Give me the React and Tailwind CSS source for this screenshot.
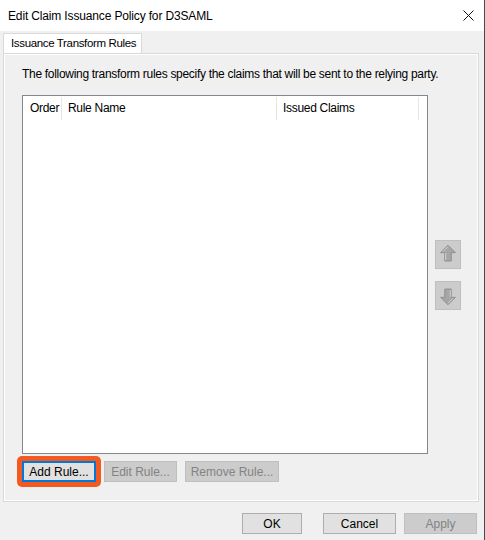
import React from "react";

const ui = "font-['Liberation_Sans',Arial,sans-serif]";

function ArrowIcon({ down = false }) {
  // chunky grey arrow used on the disabled move up / move down buttons
  return (
    <svg width="26" height="29" viewBox="0 0 26 29" className={down ? "rotate-180" : ""}>
      <path
        d="M13 4.5 L21 12.5 L16.5 12.5 L16.5 21.5 L9.5 21.5 L9.5 12.5 L5 12.5 Z"
        fill="#a6a6a6"
        stroke="#8c8c8c"
        strokeWidth="1"
        strokeLinejoin="miter"
      />
      <path d="M13 6 L7.5 11.5 M10.5 13 L10.5 20.5" stroke="#d6d6d6" strokeWidth="1" fill="none" />
    </svg>
  );
}

function SideButton({ down }) {
  return (
    <div className="w-[26px] h-[29px] bg-[#cccccc] border border-[#bfbfbf] flex items-center justify-center">
      <ArrowIcon down={down} />
    </div>
  );
}

function Btn({ children, disabled, w, className = "" }) {
  return (
    <button
      className={`h-[21px] ${w} text-[12px] leading-none border ${
        disabled
          ? "bg-[#cccccc] border-[#bfbfbf] text-[#838383]"
          : "bg-[#e1e1e1] border-[#adadad] text-black"
      } ${className}`}
    >
      {children}
    </button>
  );
}

export default function App() {
  return (
    <div className={`w-[485px] h-[540px] bg-[#f0f0f0] border-r border-[#4a4a4a] flex flex-col ${ui}`}>
      {/* title bar */}
      <div className="h-[31px] bg-white flex items-center justify-between pl-[8px] pr-[10px] shrink-0">
        <span className="text-[12px] text-black tracking-[-0.15px]">
          Edit Claim Issuance Policy for D3SAML
        </span>
        <svg width="11" height="11" viewBox="0 0 11 11">
          <path d="M0.5 0.5 L10.5 10.5 M10.5 0.5 L0.5 10.5" stroke="#111" strokeWidth="1" />
        </svg>
      </div>

      <div className="pl-[3px] pt-[2px]">
        {/* tab header */}
        <div className="w-[139px] h-[20px] bg-white border border-b-0 border-[#d9d9d9] flex items-center pl-[7px] text-[11.5px] text-black whitespace-nowrap tracking-[-0.35px] relative z-10">
          Issuance Transform Rules
        </div>

        {/* tab page */}
        <div className="w-[476px] h-[449px] border border-[#d9d9d9] bg-white p-px">
          <div className="w-full h-full bg-[#f0f0f0] pl-[17px] pt-[12px]">
            <p className="text-[12px] leading-[14px] text-black tracking-[-0.3px]">
              The following transform rules specify the claims that will be sent to the relying party.
            </p>

            <div className="flex mt-[14px]">
              {/* rule list */}
              <div className="w-[406px] h-[359px] bg-white border border-[#828790]">
                <div className="flex h-[24px] text-[12px] text-black tracking-[-0.3px]">
                  <div className="w-[38px] flex items-center pl-[7px]">Order</div>
                  <div className="w-px h-[23px] mt-[1px] bg-[#e5e5e5]" />
                  <div className="w-[214px] flex items-center pl-[6px]">Rule Name</div>
                  <div className="w-px h-[23px] mt-[1px] bg-[#e5e5e5]" />
                  <div className="w-[141px] flex items-center pl-[6px]">Issued Claims</div>
                  <div className="w-px h-[23px] mt-[1px] bg-[#e5e5e5]" />
                </div>
              </div>

              <div className="ml-[7px] mt-[145px] flex flex-col gap-[12px]">
                <SideButton />
                <SideButton down />
              </div>
            </div>

            <div className="flex items-start gap-[8px] mt-[7px]">
              <span className="-m-[5px] p-[5px] bg-[#f25a22] rounded-[5px] flex">
                <button className="h-[21px] w-[74px] text-[12px] leading-none bg-[#e1e1e1] border-2 border-[#0078d7] text-black">
                  Add Rule...
                </button>
              </span>
              <Btn disabled w="w-[73px]">
                Edit Rule...
              </Btn>
              <Btn disabled w="w-[94px]">
                Remove Rule...
              </Btn>
            </div>
          </div>
        </div>
      </div>

      {/* dialog buttons */}
      <div className="flex justify-end pr-[7px] mt-[11px]">
        <Btn w="w-[60px]">OK</Btn>
        <Btn w="w-[73px]" className="ml-[21px]">
          Cancel
        </Btn>
        <Btn disabled w="w-[73px]" className="ml-[8px]">
          Apply
        </Btn>
      </div>
    </div>
  );
}
